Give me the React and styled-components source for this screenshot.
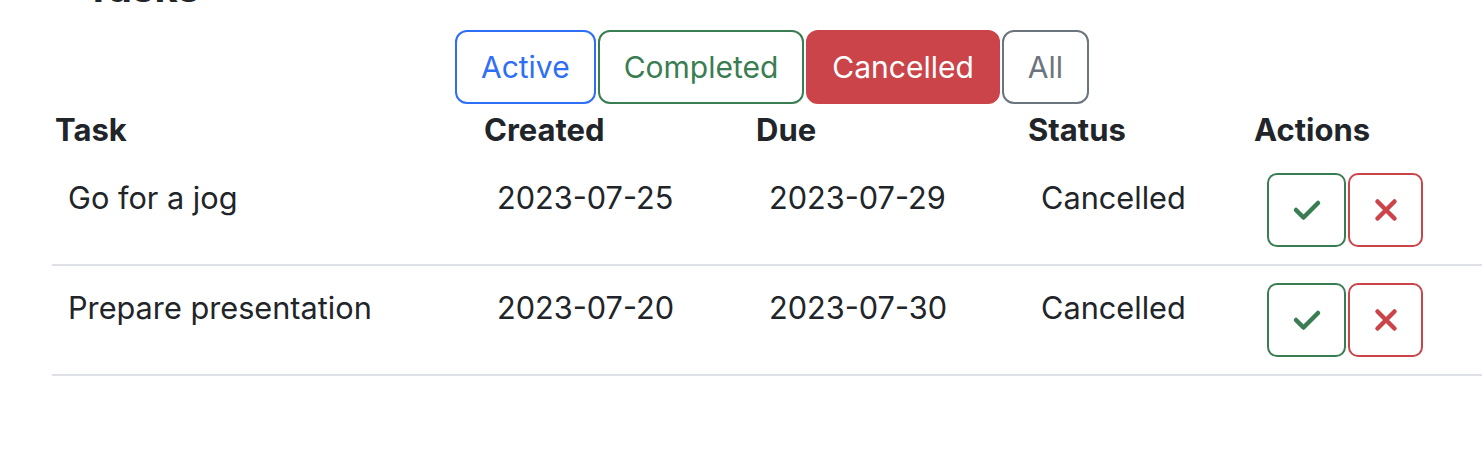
import React from "react";
import styled, { createGlobalStyle, css } from "styled-components";

const colorSet = {
  text: "#212529",
  blue: "#2f6ef6",
  green: "#3a7d52",
  red: "#cb444a",
  grey: "#6c757d",
  line: "#dee2e6",
};

const tasks = [
  { id: 1, name: "Go for a jog", created: "2023-07-25", due: "2023-07-29", status: "Cancelled" },
  { id: 2, name: "Prepare presentation", created: "2023-07-20", due: "2023-07-30", status: "Cancelled" },
];

const filters = [
  { label: "Active", color: colorSet.blue },
  { label: "Completed", color: colorSet.green },
  { label: "Cancelled", color: colorSet.red, selected: true },
  { label: "All", color: colorSet.grey },
];

const GlobalStyle = createGlobalStyle`
  html, body {
    margin: 0;
    padding: 0;
    background: #fff;
    overflow: hidden;
  }
  body {
    font-family: Inter, "Liberation Sans", sans-serif;
    color: ${colorSet.text};
  }
`;

const CheckIcon = () => (
  <svg width="30" height="24" viewBox="0 0 30 24">
    <polyline
      points="4,12 11.5,19.5 26,5"
      fill="none"
      stroke={colorSet.green}
      strokeWidth="4.5"
      strokeLinecap="round"
      strokeLinejoin="round"
    />
  </svg>
);

const CrossIcon = () => (
  <svg width="24" height="24" viewBox="0 0 24 24">
    <path
      d="M3.5 3.5 L20.5 20.5 M20.5 3.5 L3.5 20.5"
      fill="none"
      stroke={colorSet.red}
      strokeWidth="4.5"
      strokeLinecap="round"
    />
  </svg>
);

const App = () => {
  return (
    <>
      <GlobalStyle />
      <Page>
        <Title>Tasks</Title>
        <FilterGroup>
          {filters.map((f) => (
            <FilterBtn key={f.label} $color={f.color} $selected={f.selected}>
              {f.label}
            </FilterBtn>
          ))}
        </FilterGroup>
        <Table>
          <HeadRow>
            <HeadCell>Task</HeadCell>
            <HeadCell>Created</HeadCell>
            <HeadCell>Due</HeadCell>
            <HeadCell>Status</HeadCell>
            <HeadCell>Actions</HeadCell>
          </HeadRow>
          {tasks.map((t) => (
            <Row key={t.id}>
              <Cell>{t.name}</Cell>
              <Cell>{t.created}</Cell>
              <Cell>{t.due}</Cell>
              <Cell>{t.status}</Cell>
              <ActionCell>
                <ActionBtn $color={colorSet.green} $w={79}>
                  <CheckIcon />
                </ActionBtn>
                <ActionBtn $color={colorSet.red} $w={75}>
                  <CrossIcon />
                </ActionBtn>
              </ActionCell>
            </Row>
          ))}
        </Table>
      </Page>
    </>
  );
};

const Page = styled.div`
  width: 1440px;
  margin-left: 52px;
  display: flex;
  flex-direction: column;
`;

const Title = styled.h2`
  margin: -36px 0 0 33px;
  font-size: 40px;
  line-height: 48px;
  font-weight: 700;
`;

const FilterGroup = styled.div`
  margin-top: 18px;
  align-self: center;
  display: flex;
  gap: 2px;
`;

const FilterBtn = styled.button`
  height: 74px;
  padding: 0 24px;
  font-family: Inter, "Liberation Sans", sans-serif;
  font-size: 30px;
  font-weight: 400;
  border-radius: 12px;
  border: 2px solid ${(p) => p.$color};
  color: ${(p) => p.$color};
  background: #fff;
  ${(p) =>
    p.$selected &&
    css`
      background: ${p.$color};
      color: #fff;
    `}
`;

const Table = styled.div`
  display: flex;
  flex-direction: column;
`;

const columns = css`
  display: grid;
  grid-template-columns: 429px 272px 272px 226px 1fr;
`;

const HeadRow = styled.div`
  ${columns}
  height: 52px;
  align-items: center;
`;

const HeadCell = styled.div`
  padding-left: 3px;
  font-size: 31px;
  font-weight: 700;
  line-height: 52px;
`;

const Row = styled.div`
  ${columns}
  align-items: start;
  padding: 17px 0;
  border-bottom: 2px solid ${colorSet.line};
`;

const Cell = styled.div`
  padding-left: 16px;
  font-size: 30.7px;
  line-height: 50px;
`;

const ActionCell = styled.div`
  padding-left: 16px;
  display: flex;
  gap: 2px;
`;

const ActionBtn = styled.button`
  width: ${(p) => p.$w}px;
  height: 74px;
  padding: 0;
  display: flex;
  align-items: center;
  justify-content: center;
  background: #fff;
  border: 2px solid ${(p) => p.$color};
  border-radius: 10px;
`;

export default App;
